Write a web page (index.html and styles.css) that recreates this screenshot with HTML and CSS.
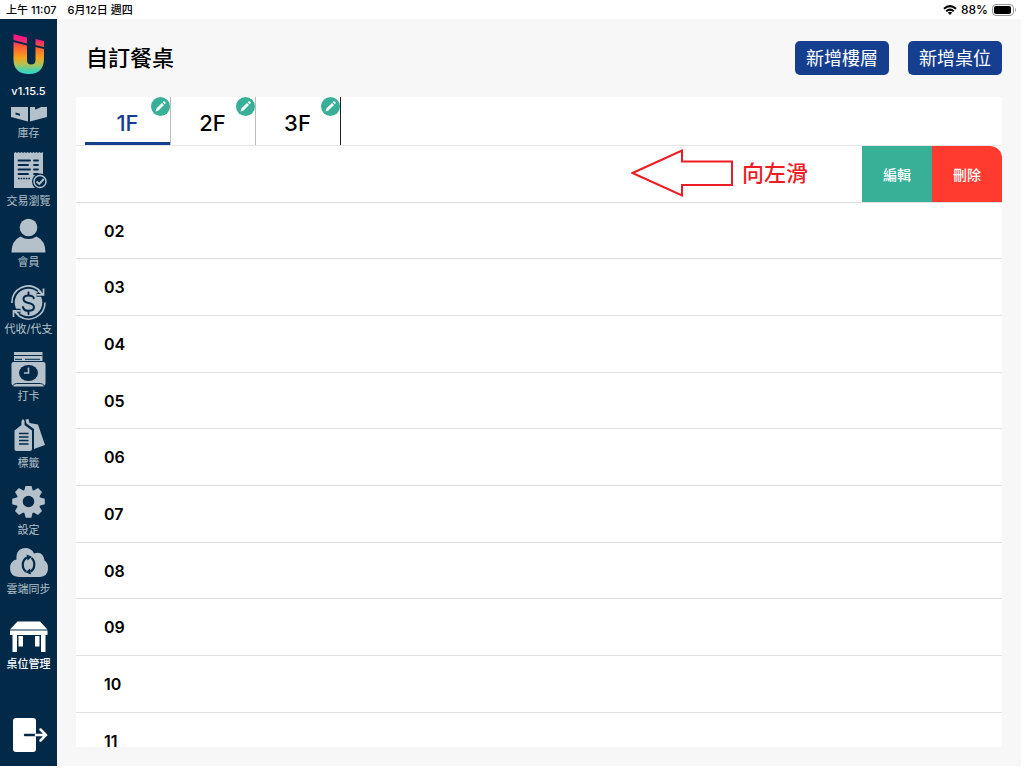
FILE: index.html
```html
<!DOCTYPE html>
<html lang="zh-Hant">
<head>
<meta charset="utf-8">
<title>自訂餐桌</title>
<link rel="stylesheet" href="styles.css">
</head>
<body>
<header class="status">
  <span>上午 11:07</span>
  <span class="status-date">6月12日 週四</span>
  <svg class="wifi" width="14" height="10" viewBox="0 0 14 10" fill="none" stroke="#000" stroke-width="2"><path d="M1 3.8Q7-1.5 13 3.8M3.2 6.2Q7 3 10.8 6.2"/><path d="M4.800 7.600Q7 5.800 9.200 7.600L7 10Z" fill="#000" stroke="none"/></svg>
  <span class="charge">88%</span>
  <svg class="battery" width="25" height="12" viewBox="0 0 25 12"><rect x=".5" y=".5" width="21" height="11" rx="3.5" fill="none" stroke="#999"/><rect x="2" y="2" width="17" height="8" rx="2"/><path d="M23 4q2 2 0 4z" fill="#999"/></svg>
</header>
<div class="app">
  <nav class="side" aria-label="主選單">
    <svg class="logo" width="32" height="42" viewBox="0 0 32 42">
      <defs><linearGradient id="brand" x1="0" y1="0" x2="0" y2="42" gradientUnits="userSpaceOnUse"><stop offset="0" stop-color="#f0148c"/><stop offset=".18" stop-color="#f5217a"/><stop offset=".32" stop-color="#ff5a35"/><stop offset=".58" stop-color="#f9a01b"/><stop offset=".74" stop-color="#b5c052"/><stop offset=".9" stop-color="#42d3b5"/><stop offset="1" stop-color="#35d9d0"/></linearGradient></defs>
      <path fill="url(#brand)" d="M.5 1 14 4.500V10.500L.5 7ZM22.500 6 31 8V14L22.500 12ZM.5 9 14 12.500V27Q14 31.500 18 31.500 22.500 31.500 22.500 27V14L31 16V25Q31 41 16 41 .5 41 .5 26Z"/>
    </svg>
    <span class="version">v1.15.5</span>
    <a class="item first" href="#stock">
      <svg width="38" height="19" viewBox="0 0 38 19"><path fill="currentColor" d="M1 1H18V15.500L1 11ZM20 1H25V3.500L28 2.500 31 1H37V11L20 15.500Z"/><path d="M5.500 6.500 10 7.700V9.800L5.500 8.600Z" fill="#022a48"/></svg>
      <span>庫存</span></a>
    <a class="item tall" href="#sales">
      <svg width="36" height="41" viewBox="0 0 36 41"><path fill="currentColor" d="M3 1 4.500 0 6 1 7.500 0 9 1 10.500 0 12 1 13.500 0 15 1 16.500 0 18 1 19.500 0 21 1 22.500 0 24 1 25.500 0 27 1 28.500 0 30 1 32 0V36H3Z"/><path d="M7.500 8.500H19M23 8.500H27M7.500 13H17M23 13H27M7.500 17.500H19M23 17.500H27M7.500 22H17M23 22H27" stroke="#022a48" stroke-width="1.800" stroke-linecap="round"/><path d="M7 26.500H20" stroke="#022a48" stroke-width="1.600" stroke-dasharray="1.600 1"/><circle cx="29" cy="29.500" r="8" fill="#022a48"/><circle cx="29" cy="29.500" r="6" fill="none" stroke="currentColor" stroke-width="1.500"/><path d="m25.500 29.500 2.800 2.500 4.500-5" fill="none" stroke="currentColor" stroke-width="1.900"/></svg>
      <span>交易瀏覽</span></a>
    <a class="item near" href="#members">
      <svg width="36" height="36" viewBox="0 0 36 36"><circle cx="17.500" cy="9.500" r="8.800" fill="currentColor"/><path fill="currentColor" d="M.5 34.500Q.5 22.500 9.500 18.500 17.500 23.500 25.500 18.500 34.500 22.500 34.500 34.500Z"/></svg>
      <span>會員</span></a>
    <a class="item" href="#payments">
      <svg width="36" height="36" viewBox="0 0 36 36"><circle cx="17.500" cy="17.500" r="13.800" fill="currentColor"/><g fill="none" stroke="currentColor" stroke-width="1.600"><path d="M.9 18A16.500 16.500 0 0 1 27.500 4.500L31 8M34 17.500A16.500 16.500 0 0 1 8 31L4.500 27.500"/></g><path d="M25.500 9.800H32.500V3.500M9.500 25.800H2.500V32" fill="none" stroke="#022a48" stroke-width="4"/><path d="M25.500 9.800H32.500V3.500M27 5.500 32 9.500M9.500 25.800H2.500V32M8 30 3 26" fill="none" stroke="currentColor" stroke-width="1.700"/><path d="M22.800 13.300Q22.300 10.500 17.500 10.500 12.500 10.500 12.500 14 12.500 17 17.500 18 23 19 23 22.300 23 25.800 17.500 25.800 12.500 25.800 12 22M17.500 7.500V10.500M17.500 25.800V29" fill="none" stroke="#022a48" stroke-width="2" stroke-linecap="round"/></svg>
      <span>代收/代支</span></a>
    <a class="item" href="#clock">
      <svg width="36" height="36" viewBox="0 0 36 36"><path fill="currentColor" d="M3 0H31.500V9H3ZM2.500 10H32.500Q34.500 10 34.500 12V32L32.500 34.500H2.500L.5 32V12Q.5 10 2.500 10Z"/><path d="M3 3.500H31.500M4 7.300H11M14 7.300H29" stroke="#022a48" stroke-width="1"/><path d="M1.500 34Q3.500 31.500 5.500 31.500H29.500Q31.500 31.500 33.500 34" fill="none" stroke="#022a48"/><ellipse cx="17.500" cy="21" rx="9.500" ry="8" fill="#022a48"/><path d="M17.500 15.500V21H13" fill="none" stroke="currentColor" stroke-width="1.600"/></svg>
      <span>打卡</span></a>
    <a class="item" href="#labels">
      <svg width="36" height="36" viewBox="0 0 36 36"><path fill="currentColor" d="M10.500 6V2L12 0 13.500 2V6L21 11.500V30Q21 32 19 32H5.500Q3.500 32 3.500 30V11.500ZM14.500.5 17.500 0 18.500 4 27 5.500 34 26 23 30V10L15.500 4.500Z"/><path d="M8 14.500H17.500M8 18H17.500M8 21.500H17.500M8 25H17.500" stroke="#022a48" stroke-width="1.700"/></svg>
      <span>標籤</span></a>
    <a class="item" href="#settings">
      <svg width="36" height="36" viewBox="0 0 36 36"><g transform="translate(17.500 15.500)" fill="currentColor"><g id="teeth"><path id="tooth" d="M-4.500-10-2.800-16.300H2.800L4.500-10Z"/><use href="#tooth" transform="rotate(45)"/><use href="#tooth" transform="rotate(90)"/><use href="#tooth" transform="rotate(135)"/></g><use href="#teeth" transform="rotate(180)"/><circle r="12"/><circle r="5.800" fill="#022a48"/></g></svg>
      <span>設定</span></a>
    <a class="item cloud" href="#sync">
      <svg width="40" height="36" viewBox="0 0 40 36"><path fill="currentColor" d="M10 32Q1 31.500 1 23 1 16 7.500 14.500 6.500 3.500 16.500 3 22.500 3 25 8.500 34 5.500 35.500 15.500 39.500 18 39 24 38.500 31.500 31 32Z"/><path d="M17 26.500A6.500 7.800 0 0 1 18 12.500M22.500 13A6.500 7.800 0 0 1 21.500 26.500" fill="none" stroke="#022a48" stroke-width="2.200"/><path d="M17.500 9.500 23 11.800 18.500 15.500ZM22 29.500 16.500 27.200 21 23.500Z" fill="#022a48"/></svg>
      <span>雲端同步</span></a>
    <a class="item current" href="#tables" aria-current="page">
      <svg width="40" height="36" viewBox="0 0 40 36"><path fill="#fff" d="M8.500 1.500H31L38.500 9.500H1ZM1 10.500H38.500V15H1ZM3.500 15H8V32H3.500ZM9.500 16H14V26.500H9.500ZM26 16H30.500V26.500H26ZM32 15H36.500V32H32Z"/></svg>
      <span>桌位管理</span></a>
    <button class="logout" type="button" aria-label="登出">
      <svg width="36" height="34" viewBox="0 0 36 34"><rect width="23" height="34" rx="3" fill="#fff"/><path d="M12 17H23" stroke="#022a48" stroke-width="2.400" stroke-linecap="round"/><path d="M23 17H33M27.500 11.500 33 17 27.500 22.500" fill="none" stroke="#fff" stroke-width="2.500" stroke-linecap="round"/></svg>
    </button>
  </nav>
  <main class="main">
    <div class="head">
      <h1>自訂餐桌</h1>
      <button class="primary" type="button">新增樓層</button>
      <button class="primary" type="button">新增桌位</button>
    </div>
    <section class="card">
      <div class="tabs">
        <div class="tab active"><button class="tab-name" type="button">1F</button><button class="pencil" type="button" aria-label="編輯 1F"><svg width="19" height="19" viewBox="0 0 19 19"><path id="pen" fill="#fff" d="M4.500 14.500 5.200 11.800 11 6 13 8 7.200 13.800ZM11.700 5.300 12.700 4.300Q13.200 4 13.700 4.500L14.600 5.400Q15 5.900 14.700 6.300L13.700 7.300Z"/></svg></button></div>
        <div class="tab"><button class="tab-name" type="button">2F</button><button class="pencil" type="button" aria-label="編輯 2F"><svg width="19" height="19" viewBox="0 0 19 19"><use href="#pen"/></svg></button></div>
        <div class="tab last"><button class="tab-name" type="button">3F</button><button class="pencil" type="button" aria-label="編輯 3F"><svg width="19" height="19" viewBox="0 0 19 19"><use href="#pen"/></svg></button></div>
      </div>
      <ul class="rows">
        <li class="swiped">
          <svg width="102" height="50" viewBox="0 0 102 50"><path d="M1.500 24 51 1.500V12.500H101V36H51V46.500Z" fill="none" stroke="#ed1c24" stroke-width="2"/></svg>
          <span class="hint">向左滑</span>
          <button class="action edit" type="button">編輯</button>
          <button class="action delete" type="button">刪除</button>
        </li>
        <li>02</li>
        <li>03</li>
        <li>04</li>
        <li>05</li>
        <li>06</li>
        <li>07</li>
        <li>08</li>
        <li>09</li>
        <li>10</li>
        <li>11</li>
      </ul>
    </section>
  </main>
</div>
</body>
</html>
```
FILE: styles.css
```css
* { box-sizing: border-box; }

body {
  display: flex;
  flex-direction: column;
  height: 100vh;
  margin: 0;
  padding: 0 3px 3px 0;
  background: #fff;
  color: #000;
  font-family: Inter, "Noto Sans CJK TC", sans-serif;
  overflow: hidden;
}

button {
  margin: 0;
  padding: 0;
  border: 0;
  background: none;
  color: inherit;
  font: inherit;
}

svg { display: block; flex: none; }

.status {
  display: flex;
  flex: none;
  align-items: center;
  height: 19px;
  padding: 0 4px 0 6px;
  font-size: 11px;
  font-weight: 500;
  line-height: 18px;
}

.status-date { margin-left: 11px; }
.wifi { margin-left: auto; margin-right: 4px; }
.charge { font-size: 12px; }
.battery { margin-left: 4px; }

.app { display: flex; flex: 1; min-height: 0; }

.side {
  display: flex;
  flex: none;
  flex-direction: column;
  align-items: center;
  width: 57px;
  padding: 14px 0;
  background: #022a48;
  color: #b4c0ca;
}

.version {
  margin-top: 9px;
  color: #fff;
  font-size: 11px;
  font-weight: 500;
  line-height: 14px;
}

.item {
  display: flex;
  flex: none;
  flex-direction: column;
  align-items: center;
  margin-top: 16px;
  color: inherit;
  font-size: 11px;
  line-height: 14px;
  text-decoration: none;
  white-space: nowrap;
}

.item span { margin-top: 1px; }

.first { margin-top: 8px; }
.tall { margin-top: 12px; }
.near { margin-top: 10px; }
.cloud { margin-top: 8px; }
.current { margin-top: 24px; color: #fff; font-weight: 500; }
.logout { margin: auto 0 0 4px; }

.main {
  display: flex;
  flex: 1;
  flex-direction: column;
  min-width: 0;
  padding: 0 19px 19px;
  background: #f7f7f7;
}

.head {
  display: flex;
  flex: none;
  align-items: center;
  gap: 19px;
  height: 78px;
  padding-left: 10px;
}

h1 {
  margin: 0 auto 0 0;
  font-size: 22px;
  font-weight: 500;
  line-height: 32px;
}

.primary {
  height: 34px;
  padding: 0 11px 2px;
  border-radius: 5px;
  background: #153f8e;
  color: #fff;
  font-size: 18px;
}

.card {
  display: flex;
  flex: 1;
  flex-direction: column;
  min-height: 0;
  background: #fff;
}

.tabs {
  display: flex;
  flex: none;
  height: 49px;
  padding-left: 9px;
  border-bottom: 1px solid #e6e6e6;
}

.tab {
  position: relative;
  width: 85px;
  box-shadow: 1px 0 #bbb;
}

.tab.last { box-shadow: 1px 0 #222; }

.tab-name {
  width: 100%;
  height: 100%;
  padding-top: 7px;
  border-bottom: 3px solid transparent;
  font-size: 22px;
  font-weight: 500;
}

.tab.active { color: #153f8e; }
.active .tab-name { border-color: #153f8e; }

.pencil {
  position: absolute;
  top: 0;
  right: 0;
  border-radius: 50%;
  background: #37b097;
}

.rows {
  flex: 1;
  min-height: 0;
  margin: 0;
  padding: 0;
  overflow: hidden;
  list-style: none;
}

.rows li {
  display: flex;
  align-items: center;
  height: 57px;
  padding-left: 28px;
  border-bottom: 1px solid #e0e0e0;
  font-size: 16px;
  font-weight: 600;
}

.rows li:nth-child(3n + 2) { height: 56px; }

.rows .swiped { justify-content: flex-end; }

.hint {
  margin: 0 54px 0 9px;
  padding-bottom: 6px;
  color: #ed1c24;
  font-size: 22px;
  font-weight: 500;
}

.action {
  align-self: stretch;
  width: 70px;
  color: #fff;
  font-size: 14px;
  font-weight: 500;
}

.edit { background: #37b097; }
.delete { border-top-right-radius: 12px; background: #ff3b30; }
```
